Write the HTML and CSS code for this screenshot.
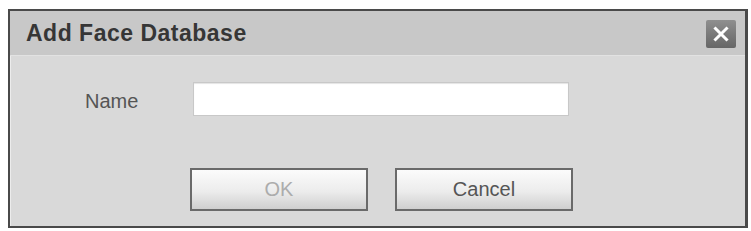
FILE: index.html
```html
<!DOCTYPE html>
<html>
<head>
<meta charset="utf-8">
<link rel="stylesheet" href="styles.css">
</head>
<body>
<div class="dialog">
  <div class="titlebar">
    <span class="title">Add Face Database</span>
    <button class="close" aria-label="Close">
      <svg width="16" height="16" viewBox="0 0 16 16"><path d="M2.5 2.5 L13.5 13.5 M13.5 2.5 L2.5 13.5" stroke="#fff" stroke-width="3" stroke-linecap="square" fill="none"/></svg>
    </button>
  </div>
  <div class="body">
    <div class="row">
      <label class="label">Name</label>
      <input class="input" type="text">
    </div>
    <div class="footer">
      <button class="btn disabled">OK</button>
      <button class="btn">Cancel</button>
    </div>
  </div>
</div>
</body>
</html>
```

FILE: styles.css
```css
html, body {
  margin: 0;
  padding: 0;
  background: #ffffff;
}
body {
  font-family: "Liberation Sans", Arial, sans-serif;
}
.dialog {
  margin: 9px 0 0 8px;
  width: 740px;
  height: 219px;
  box-sizing: border-box;
  border: 2px solid #4a4a4a;
  border-right-width: 3px;
  background: #d9d9d9;
  box-shadow: inset 1px 0 0 #ececec;
  display: flex;
  flex-direction: column;
}
.titlebar {
  height: 45px;
  flex: none;
  box-sizing: border-box;
  background: #c8c8c8;
  border-bottom: 1px solid #e2e2e2;
  display: flex;
  align-items: center;
  justify-content: space-between;
  padding: 0 9px 0 16px;
}
.title {
  font-size: 23px;
  font-weight: bold;
  color: #363636;
  letter-spacing: 0.5px;
  line-height: 44px;
}
.close {
  width: 30px;
  height: 28px;
  margin-top: 2px;
  border: none;
  border-radius: 2px;
  padding: 0;
  background: linear-gradient(#8f8f8f, #666666);
  display: flex;
  align-items: center;
  justify-content: center;
}
.body {
  flex: 1;
  display: flex;
  flex-direction: column;
}
.row {
  display: flex;
  align-items: center;
  padding: 26px 0 0 75px;
}
.label {
  width: 108px;
  font-size: 20px;
  color: #555555;
  padding-top: 4px;
}
.input {
  width: 376px;
  height: 34px;
  box-sizing: border-box;
  margin: 0;
  border: 1px solid #c8c8c8;
  background: #ffffff;
  box-shadow: inset 0 1px 1px #e4e4e4;
}
.footer {
  display: flex;
  gap: 27px;
  padding: 52px 0 0 180px;
}
.btn {
  width: 178px;
  height: 43px;
  box-sizing: border-box;
  border: 2px solid #6a6a6a;
  background: linear-gradient(#fbfbfb, #ececec 55%, #cfcfcf);
  font-family: "Liberation Sans", Arial, sans-serif;
  font-size: 20px;
  color: #555555;
  padding: 0;
}
.btn.disabled {
  color: #acacac;
}
```
